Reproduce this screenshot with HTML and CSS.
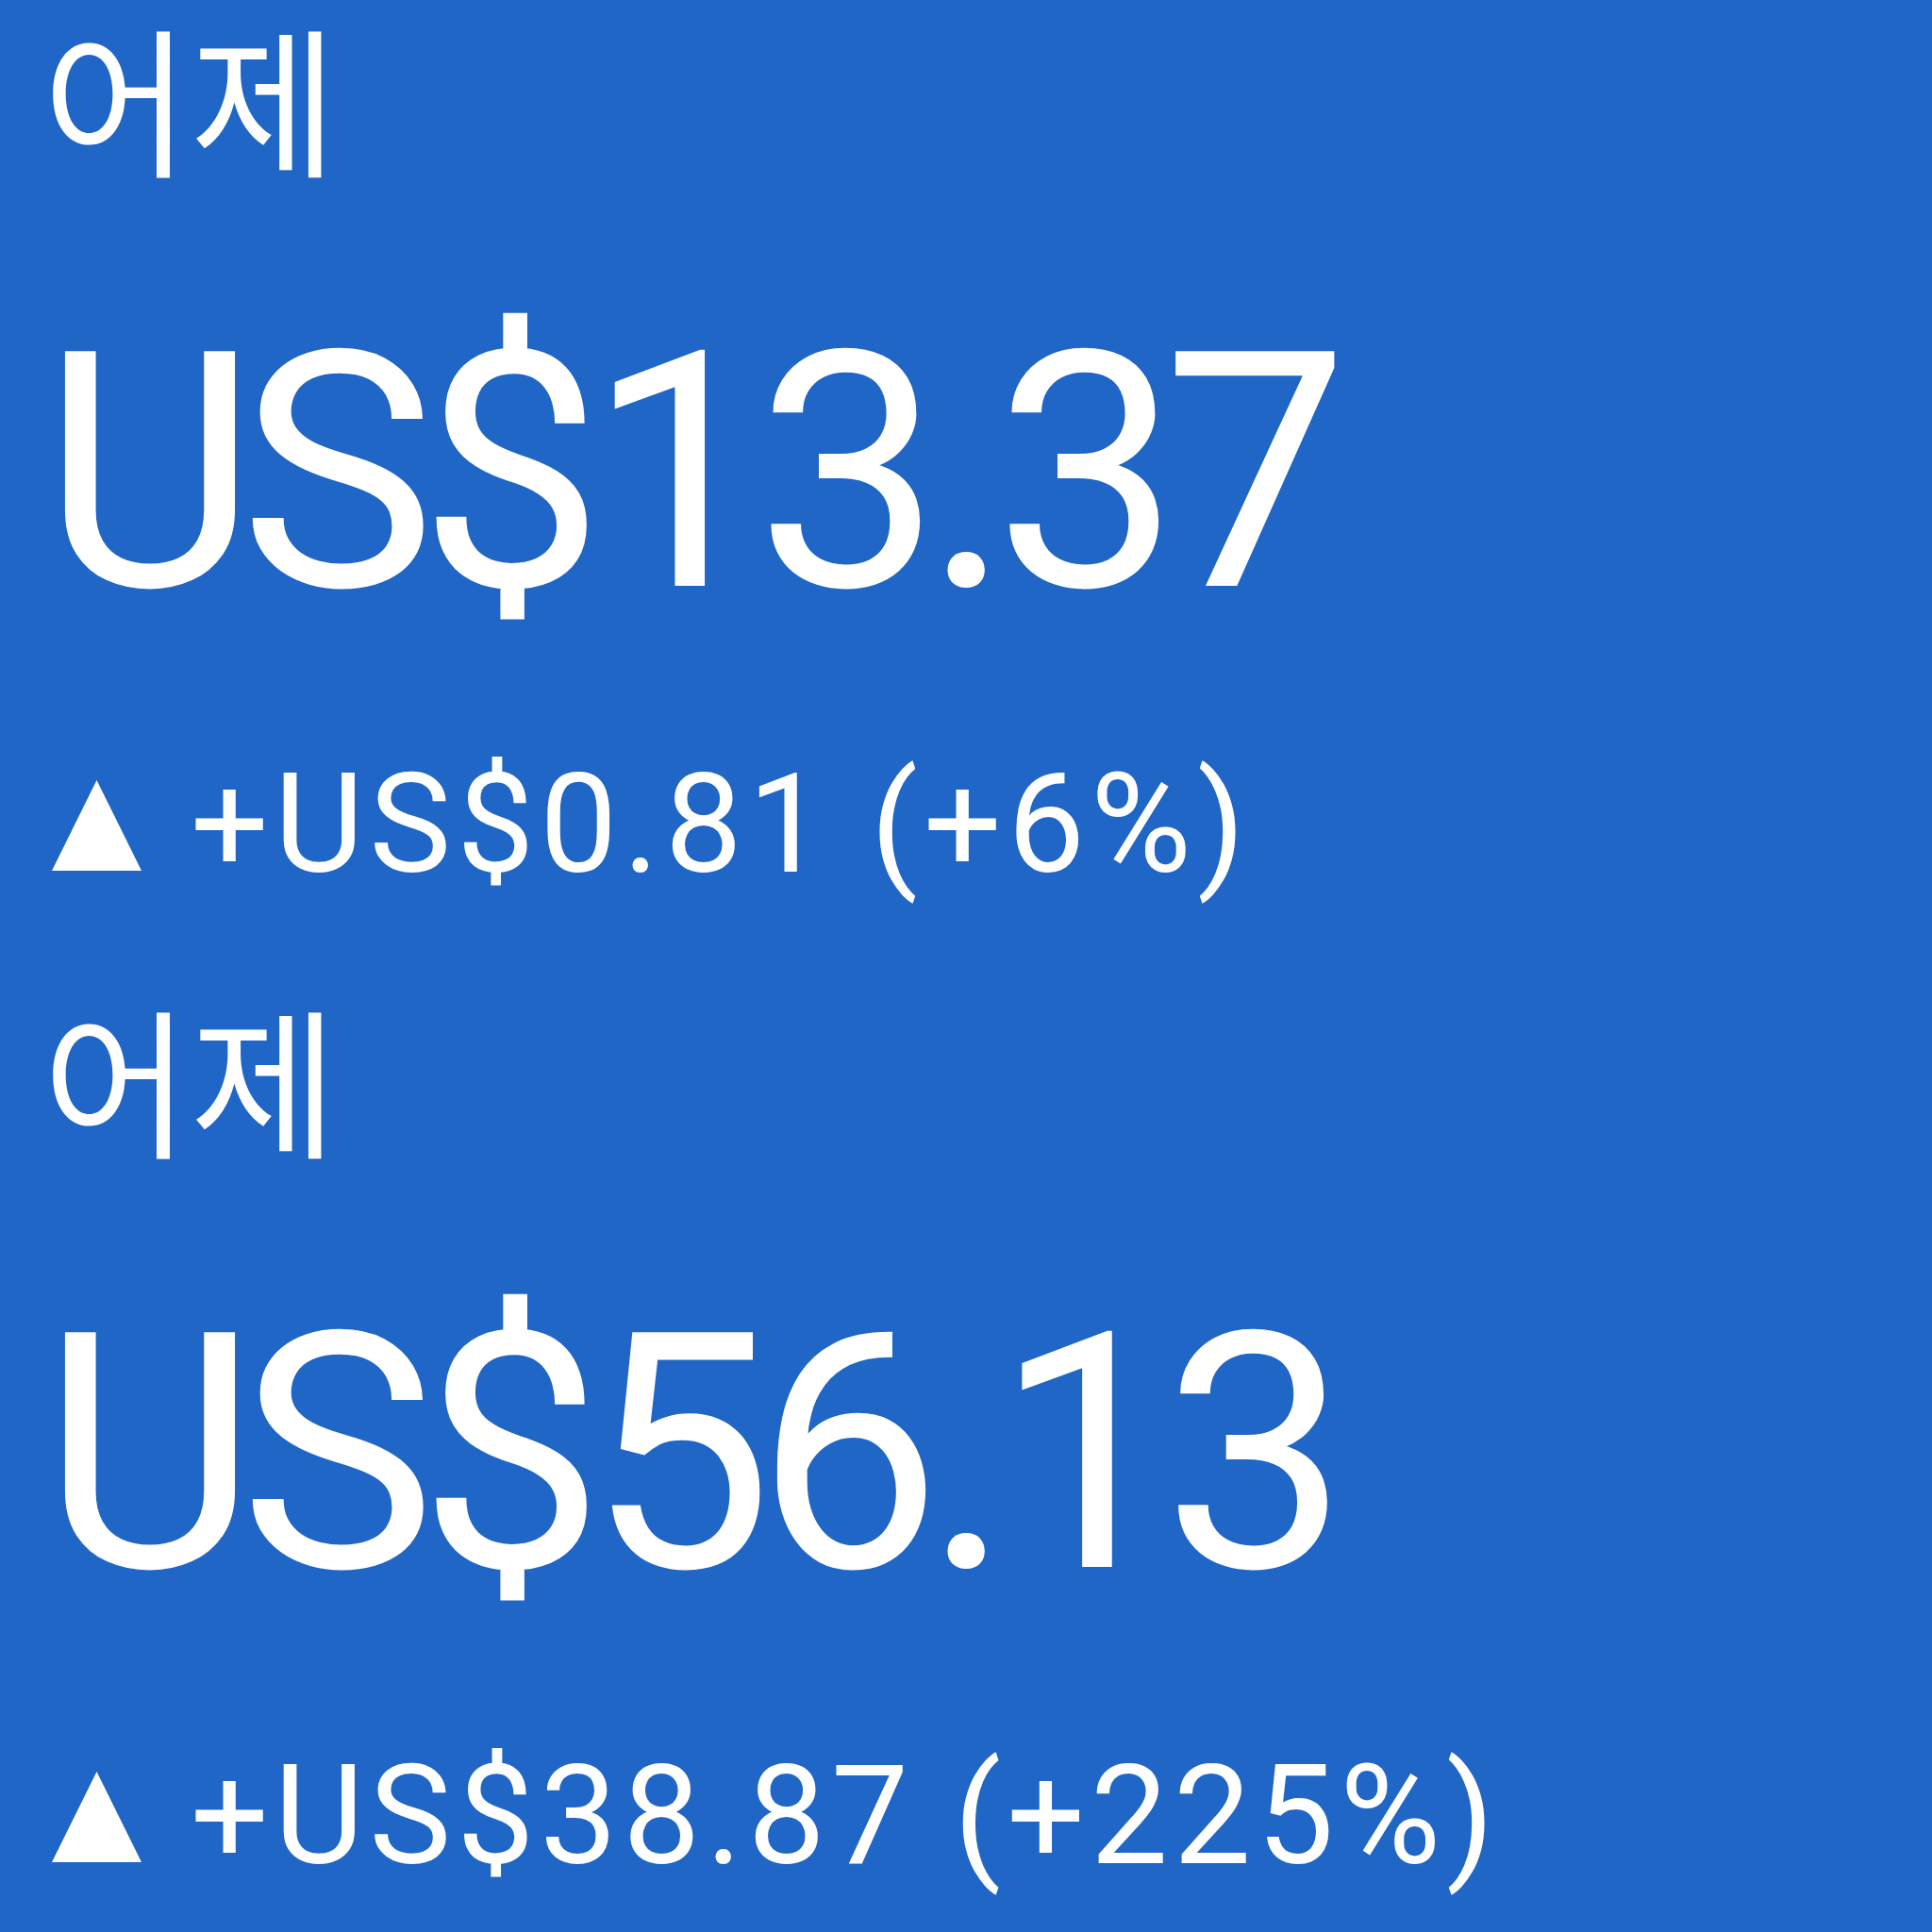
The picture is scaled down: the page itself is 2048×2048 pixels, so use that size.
FILE: index.html
```html
<!DOCTYPE html>
<html>
<head>
	<title>수익</title>
	<link rel="stylesheet" href="styles.css">
</head>
<body>
	<div class="stack">
		<div class="card first">
			<p class="label">어제</p>
			<p class="amount">US$13.37</p>
			<p class="change">
				<svg class="arrow" viewBox="0 0 95 96"><polygon points="47.5,0 95,96 0,96" fill="#fff"/></svg>
				<span>+US$0.81 (+6%)</span>
			</p>
		</div>
		<div class="card">
			<p class="label">어제</p>
			<p class="amount">US$56.13</p>
			<p class="change">
				<svg class="arrow" viewBox="0 0 95 96"><polygon points="47.5,0 95,96 0,96" fill="#fff"/></svg>
				<span>+US$38.87 (+225%)</span>
			</p>
		</div>
	</div>
</body>
</html>
```

FILE: styles.css
```css
body {
	margin: 0;
	padding: 0;
	background-color: #1f66c6;
	color: #fff;
	font-family: Roboto, "Noto Sans CJK KR", sans-serif;
	overflow: hidden;
	height: 2048px;
}

.stack {
	margin-top: -37px;
}

.card {
	height: 1040px;
	box-sizing: border-box;
	padding: 53px 0 0 45px;
	display: flex;
	flex-direction: column;
}

.card p {
	margin: 0;
	line-height: 1;
	white-space: nowrap;
}

.label {
	font-family: "Noto Sans CJK KR", sans-serif;
	font-size: 170px;
}

.card .amount {
	font-size: 350px;
	letter-spacing: -18px;
	margin-top: 140px;
}

.card .change {
	font-size: 146px;
	letter-spacing: 6px;
	margin-top: 137px;
	display: flex;
	align-items: center;
	gap: 52px;
}

.card.first .change {
	margin-top: 126px;
}

.arrow {
	width: 95px;
	height: 96px;
	margin-left: 10px;
}
```
